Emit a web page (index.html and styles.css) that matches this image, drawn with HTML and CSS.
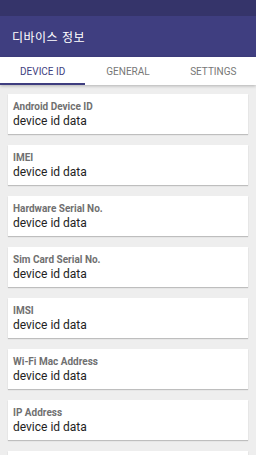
FILE: index.html
```html
<!DOCTYPE html>
<html lang="ko">
<head>
  <meta charset="UTF-8">
  <meta name="viewport" content="width=device-width, initial-scale=1.0">
  <title>디바이스 정보</title>
  <link rel="stylesheet" href="styles.css">
</head>
<body>

  <!-- Status bar -->
  <div class="status-bar"></div>

  <!-- Toolbar -->
  <div class="toolbar">
    <span class="toolbar-title">디바이스 정보</span>
  </div>

  <!-- Tabs -->
  <div class="tabs">
    <div class="tab active">DEVICE ID</div>
    <div class="tab">GENERAL</div>
    <div class="tab">SETTINGS</div>
  </div>

  <!-- Info cards -->
  <div class="content">
    <div class="card">
      <div class="card-label">Android Device ID</div>
      <div class="card-value">device id data</div>
    </div>
    <div class="card">
      <div class="card-label">IMEI</div>
      <div class="card-value">device id data</div>
    </div>
    <div class="card">
      <div class="card-label">Hardware Serial No.</div>
      <div class="card-value">device id data</div>
    </div>
    <div class="card">
      <div class="card-label">Sim Card Serial No.</div>
      <div class="card-value">device id data</div>
    </div>
    <div class="card">
      <div class="card-label">IMSI</div>
      <div class="card-value">device id data</div>
    </div>
    <div class="card">
      <div class="card-label">Wi-Fi Mac Address</div>
      <div class="card-value">device id data</div>
    </div>
    <div class="card">
      <div class="card-label">IP Address</div>
      <div class="card-value">device id data</div>
    </div>
    <!-- next card, only its top edge is on screen -->
    <div class="card"></div>
  </div>

</body>
</html>
```

FILE: styles.css
```css
/* General Styles */
body {
  margin: 0;
  font-family: Roboto, "Noto Sans", sans-serif;
  background-color: #eeeeee;
  height: 455px;
  overflow: hidden;
}

/* Status Bar */
.status-bar {
  height: 16px;
  background: #35346a;
}

/* Toolbar */
.toolbar {
  height: 41px;
  background: #3f3e80;
  display: flex;
  align-items: center;
  padding-left: 12px;
}

.toolbar-title {
  color: #ffffff;
  font-family: "Noto Sans CJK KR", sans-serif;
  font-size: 12px;
  letter-spacing: 0.5px;
}

/* Tabs */
.tabs {
  display: flex;
  height: 28px;
  background: #ffffff;
  box-shadow: 0 1px 3px rgba(0, 0, 0, 0.25);
  position: relative;
}

.tab {
  flex: 1;
  display: flex;
  align-items: center;
  justify-content: center;
  font-size: 10px;
  color: #777777;
  border-bottom: 2px solid transparent;
  box-sizing: border-box;
  padding-top: 2px;
}

.tab.active {
  color: #3f3e80;
  border-bottom-color: #3f3e80;
}

/* Cards */
.content {
  padding: 9px 8px;
  display: flex;
  flex-direction: column;
  gap: 11px;
}

.card {
  height: 40px;
  flex-shrink: 0;
  background: #ffffff;
  box-shadow: 0 1px 1px rgba(0, 0, 0, 0.2);
  padding: 7px 5px 0;
  box-sizing: border-box;
}

.card-label {
  font-size: 10px;
  font-weight: bold;
  color: #707070;
  line-height: 12px;
}

.card-value {
  font-size: 12px;
  color: #222222;
  line-height: 16px;
}
```
